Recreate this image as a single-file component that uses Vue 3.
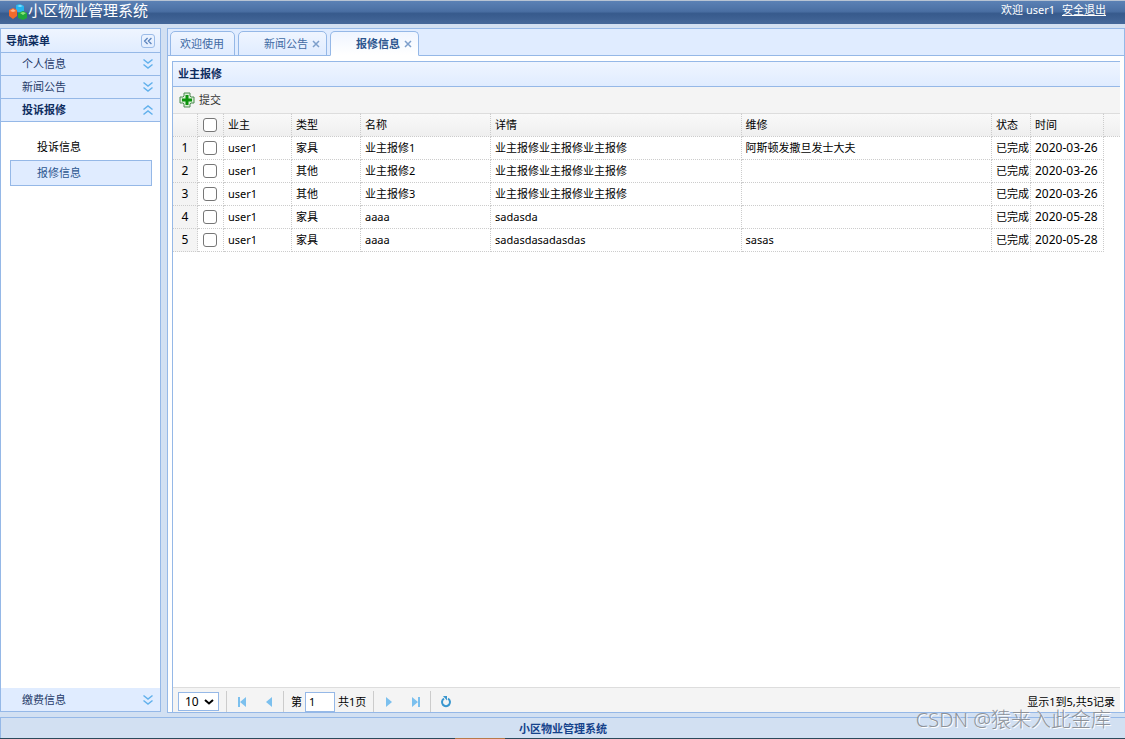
<script setup>
import { ref } from 'vue'

const title = '小区物业管理系统'
const menus = ['个人信息', '新闻公告']
const tabs = [
  { name: '欢迎使用', closable: false },
  { name: '新闻公告', closable: true },
  { name: '报修信息', closable: true },
]
const active = ref('报修信息')
const rows = [
  ['user1', '家具', '业主报修1', '业主报修业主报修业主报修', '阿斯顿发撒旦发士大夫', '已完成', '2020-03-26'],
  ['user1', '其他', '业主报修2', '业主报修业主报修业主报修', '', '已完成', '2020-03-26'],
  ['user1', '其他', '业主报修3', '业主报修业主报修业主报修', '', '已完成', '2020-03-26'],
  ['user1', '家具', 'aaaa', 'sadasda', '', '已完成', '2020-05-28'],
  ['user1', '家具', 'aaaa', 'sadasdasadasdas', 'sasas', '已完成', '2020-05-28'],
]
const heads = ['业主', '类型', '名称', '详情', '维修', '状态', '时间']
const page = ref('1')
const size = ref('10')
</script>

<template>
  <div class="app">
    <header class="top">
      <svg class="logo" width="20" height="18" viewBox="0 0 20 18">
        <path d="M8 2l4-1 4 2v5l-4 2-4-2z" fill="#25b4ee" />
        <path d="M9 3l3-1 3 1-3 1z" fill="#8fe2ff" />
        <path d="M1 7l4-2 4 2v6l-4 3-4-3z" fill="#f26a2c" />
        <path d="M2 8l3-2 3 2-3 1z" fill="#ffb58a" />
        <path d="M10 10l5-2 4 2v5l-4 2-5-2z" fill="#20a83a" />
        <path d="M12 10l3-1 3 1-3 2z" fill="#8ce477" />
      </svg>
      <h1>{{ title }}</h1>
      <div class="user"><span>欢迎 user1</span><a href="#">安全退出</a></div>
    </header>

    <div class="body">
      <nav class="side">
        <div class="side-head">
          <span>导航菜单</span>
          <button class="collapse" aria-label="收起">
            <svg width="14" height="14" viewBox="0 0 14 14"><path d="M6.500 3.500L3 7l3.500 3.500M11 3.500L7.500 7l3.500 3.500" /></svg>
          </button>
        </div>
        <button v-for="m in menus" :key="m" class="acc">
          <span>{{ m }}</span>
          <svg width="12" height="12" viewBox="0 0 12 12"><path d="M1.500 1.500L6 5l4.500-3.500M1.500 6.500L6 10l4.500-3.500" /></svg>
        </button>
        <button class="acc on">
          <span>投诉报修</span>
          <svg width="12" height="12" viewBox="0 0 12 12"><path d="M1.500 5.500L6 2l4.500 3.500M1.500 10.500L6 7l4.500 3.500" /></svg>
        </button>
        <div class="links">
          <a href="#">投诉信息</a>
          <a href="#" class="sel">报修信息</a>
        </div>
        <button class="acc last">
          <span>缴费信息</span>
          <svg width="12" height="12" viewBox="0 0 12 12"><path d="M1.500 1.500L6 5l4.500-3.500M1.500 6.500L6 10l4.500-3.500" /></svg>
        </button>
      </nav>

      <main class="main">
        <div class="tabs">
          <div v-for="t in tabs" :key="t.name" class="tab" :class="{ active: t.name === active, closable: t.closable }">
            <button class="tab-name" @click="active = t.name">{{ t.name }}</button>
            <button v-if="t.closable" class="x" aria-label="关闭">
              <svg width="8" height="8" viewBox="0 0 8 8"><path d="M1 1l6 6M7 1L1 7" /></svg>
            </button>
          </div>
        </div>

        <section class="panel">
          <h2>业主报修</h2>
          <div class="toolbar">
            <button class="add">
              <svg width="16" height="16" viewBox="0 0 16 16">
                <path d="M5 1h6v3l1 1h3v6h-3l-1 1v3H5v-3l-1-1H1V5h3l1-1z" fill="#d9efd6" stroke="#4c8a50" />
                <path d="M6.500 3h3v3.500H13v3H9.500V13h-3V9.500H3v-3h3.500z" fill="#0c930c" />
              </svg>
              提交
            </button>
          </div>
          <div class="grid">
            <table>
              <colgroup>
                <col class="c-num"><col class="c-check"><col class="c-owner"><col class="c-type"><col class="c-name">
                <col><col><col class="c-state"><col class="c-date"><col class="c-end">
              </colgroup>
              <thead>
                <tr>
                  <th></th>
                  <th class="check"><input type="checkbox" aria-label="全选"></th>
                  <th v-for="h in heads" :key="h">{{ h }}</th>
                  <th class="end"></th>
                </tr>
              </thead>
              <tbody>
                <tr v-for="(r, i) in rows" :key="i">
                  <td class="num">{{ i + 1 }}</td>
                  <td class="check"><input type="checkbox" :aria-label="'选择第' + (i + 1) + '行'"></td>
                  <td v-for="(c, j) in r" :key="j" :class="{ date: j === 6 }">{{ c }}</td>
                  <td class="end"></td>
                </tr>
              </tbody>
            </table>
          </div>
          <div class="pager">
            <div class="size">
              <select v-model="size" aria-label="每页条数"><option>10</option><option>20</option><option>50</option></select>
              <svg width="10" height="8" viewBox="0 0 10 8"><path d="M1 2l4 3.500L9 2" /></svg>
            </div>
            <i class="sep"></i>
            <button class="pg" aria-label="首页"><svg width="10" height="10" viewBox="0 0 10 10"><path d="M1 0h2v10H1zM9 0v10L3 5z" /></svg></button>
            <button class="pg" aria-label="上一页"><svg width="10" height="10" viewBox="0 0 10 10"><path d="M8 0v10L2 5z" /></svg></button>
            <i class="sep"></i>
            <label class="pageno">第<input v-model="page" type="text"></label>
            <span class="total">共1页</span>
            <i class="sep"></i>
            <button class="pg" aria-label="下一页"><svg width="10" height="10" viewBox="0 0 10 10"><path d="M2 0v10l6-5z" /></svg></button>
            <button class="pg" aria-label="末页"><svg width="10" height="10" viewBox="0 0 10 10"><path d="M7 0h2v10H7zM1 0v10l6-5z" /></svg></button>
            <i class="sep"></i>
            <button class="pg reload" aria-label="刷新">
              <svg width="12" height="12" viewBox="0 0 12 12">
                <path d="M8 2.700A4 4 0 1 1 4 2.700" fill="none" stroke="#3a97cf" stroke-width="2" />
                <path d="M3 0h4v4.500z" fill="#3a97cf" />
              </svg>
            </button>
            <span class="info">显示1到5,共5记录</span>
          </div>
        </section>
      </main>
    </div>

    <footer class="foot">{{ title }}</footer>
    <div class="edge"><i></i></div>
    <div class="mark">CSDN @猿来入此金库</div>
  </div>
</template>

<style>
body {
  margin: 0;
}
</style>

<style scoped>
* {
  box-sizing: border-box;
}
.app {
  position: relative;
  display: flex;
  flex-direction: column;
  min-height: 100vh;
  background: #d2e0f2;
  color: #000;
  font: 11px/16px "Noto Sans", "Noto Sans CJK SC", sans-serif;
}
button,
input,
select {
  margin: 0;
  padding: 0;
  border: 0;
  background: none;
  color: inherit;
  font: inherit;
}
svg {
  display: block;
  flex: none;
}
.top {
  display: flex;
  align-items: center;
  height: 24px;
  padding: 0 19px 5px 8px;
  border-top: 1px solid #b7c3d3;
  background: linear-gradient(#5b81b5 0, #4a6fa3 45%, #375a8c 55%, #45689a 100%);
  color: #fff;
}
.logo {
  align-self: flex-end;
  margin-bottom: -2px;
}
.top h1 {
  flex: 1;
  margin: 0;
  font-size: 15px;
  font-weight: 400;
  line-height: 18px;
}
.user {
  display: flex;
  gap: 7px;
}
.user a {
  color: #fff;
}
.body {
  display: flex;
  flex: 1;
  gap: 6px;
  padding: 4px 0;
}
.side {
  display: flex;
  flex-direction: column;
  width: 161px;
  flex: none;
  margin-bottom: 1px;
  border: 1px solid #95b8e7;
  background: #fff;
}
.side-head {
  display: flex;
  align-items: center;
  justify-content: space-between;
  height: 23px;
  padding: 0 5px;
  background: linear-gradient(#eff5ff, #e0ecff);
  color: #0e2d5f;
  font-weight: 700;
}
.collapse {
  border: 1px solid #9cbce8;
  border-radius: 3px;
}
.collapse svg {
  width: 12px;
  height: 12px;
  fill: none;
  stroke: #5a83bd;
  stroke-width: 1.500;
}
.acc {
  display: flex;
  align-items: center;
  justify-content: space-between;
  height: 23px;
  padding: 0 6px 0 21px;
  border-top: 1px solid #95b8e7;
  background: #e0ecff;
  color: #1f3a68;
}
.acc svg {
  fill: none;
  stroke: #62b1ec;
  stroke-width: 1.500;
}
.acc.on {
  height: 24px;
  border-bottom: 1px solid #95b8e7;
  color: #0e2d5f;
  font-weight: 700;
}
.acc.last {
  border-top-color: #e0ecff;
}
.links {
  display: flex;
  flex: 1;
  flex-direction: column;
  padding: 12px 8px 12px 9px;
}
.links a {
  padding: 4px 26px;
  border: 1px solid transparent;
  color: #000;
  text-decoration: none;
}
.links .sel {
  border-color: #95b8e7;
  background: #e0ecff;
  color: #2c568f;
}
.main {
  display: flex;
  flex: 1;
  flex-direction: column;
  min-width: 0;
  border: 1px solid #95b8e7;
  background: #fff;
}
.tabs {
  display: flex;
  align-items: flex-end;
  gap: 3px;
  height: 27px;
  padding: 0 2px;
  border-bottom: 1px solid #95b8e7;
  background: #e0ecff;
}
.tab {
  display: flex;
  align-items: center;
  height: 25px;
  margin-bottom: -1px;
  padding: 0 10px 0 9px;
  border: 1px solid #95b8e7;
  border-radius: 5px 5px 0 0;
  background: linear-gradient(#eff5ff, #e0ecff);
  color: #416aa3;
}
.tab.closable {
  padding: 0 6px 0 25px;
}
.tab.active {
  border-bottom-color: #fff;
  background: linear-gradient(#eff5ff, #fff);
  color: #2c568f;
  font-weight: 700;
}
.x {
  margin-left: 4px;
}
.x svg {
  fill: none;
  stroke: #7d9fcb;
  stroke-width: 1.500;
}
.panel {
  display: flex;
  flex: 1;
  flex-direction: column;
  margin: 5px 4px 0 4px;
  border: solid #95b8e7;
  border-width: 1px 0 0 1px;
}
.panel h2 {
  height: 25px;
  margin: 0;
  padding: 0 5px;
  border-bottom: 1px solid #95b8e7;
  background: linear-gradient(#eff5ff, #e0ecff);
  color: #0e2d5f;
  font-size: 11px;
  line-height: 24px;
}
.toolbar {
  display: flex;
  height: 26px;
  padding: 0 6px;
  background: #f4f4f4;
}
.add {
  display: flex;
  align-items: center;
  gap: 4px;
  color: #333;
}
.grid {
  flex: 1;
}
table {
  width: 100%;
  border-collapse: separate;
  border-spacing: 0;
  table-layout: fixed;
}
.c-num { width: 25px; }
.c-check { width: 26px; }
.c-owner { width: 68px; }
.c-type { width: 69px; }
.c-name { width: 130px; }
.c-state { width: 39px; }
.c-date { width: 73px; }
.c-end { width: 16px; }
th,
td {
  height: 23px;
  padding: 0 0 0 4px;
  border: dotted #ccc;
  border-width: 0 1px 1px 0;
  font-weight: 400;
  text-align: left;
  white-space: nowrap;
}
th {
  height: 24px;
  border-top: 1px solid #ddd;
  background: linear-gradient(#f9f9f9, #efefef);
}
.num {
  padding: 0;
  background: #f4f4f4;
  font-size: 12px;
  text-align: center;
}
.date {
  font-size: 12px;
}
th.end {
  border-right: 0;
}
td.end {
  border: 0;
}
.check {
  padding: 0 5px;
}
.check input {
  display: block;
  width: 14px;
  height: 14px;
  border: 1px solid #767676;
  border-radius: 3px;
  background: #fff;
  appearance: none;
}
.check input:checked {
  background: #2f75d6;
}
.pager {
  display: flex;
  align-items: center;
  height: 25px;
  padding: 3px 5px 0 5px;
  border-top: 1px solid #ddd;
  background: #f4f4f4;
}
.size {
  position: relative;
  margin-right: 7px;
}
.size select {
  display: block;
  width: 41px;
  height: 19px;
  padding: 0 6px;
  border: 1px solid #95b8e7;
  background: #fff;
  font-size: 12px;
  appearance: none;
}
.size svg {
  position: absolute;
  top: 6px;
  right: 5px;
  fill: none;
  stroke: #000;
  stroke-width: 2;
  pointer-events: none;
}
.sep {
  height: 21px;
  border-left: 1px solid #ccc;
}
.pg {
  display: flex;
  align-items: center;
  justify-content: center;
  width: 26px;
  height: 20px;
  margin-right: 1px;
}
.sep + .pg {
  margin-left: 2px;
}
.pg svg {
  fill: #7cc0ee;
}
.pageno {
  display: flex;
  align-items: center;
  gap: 3px;
  padding-left: 7px;
}
.pageno input {
  width: 30px;
  height: 20px;
  padding: 0 3px;
  border: 1px solid #95b8e7;
  background: #fff;
}
.total {
  padding: 0 7px 0 3px;
}
.info {
  margin-left: auto;
}
.foot {
  height: 21px;
  border: solid #95b8e7;
  border-width: 1px 0 0 1px;
  color: #15428b;
  font-weight: 700;
  line-height: 21px;
  text-align: center;
}
.edge {
  height: 1px;
  background: #2c4a5c;
}
.edge i {
  display: block;
  width: 50px;
  height: 1px;
  margin-left: 455px;
  background: #b87a4a;
}
.mark {
  position: absolute;
  right: 14px;
  bottom: 6px;
  color: #8e9299;
  font-size: 20px;
  font-weight: 300;
  line-height: 26px;
  text-shadow: 1px 1px #fff;
  pointer-events: none;
}
</style>
